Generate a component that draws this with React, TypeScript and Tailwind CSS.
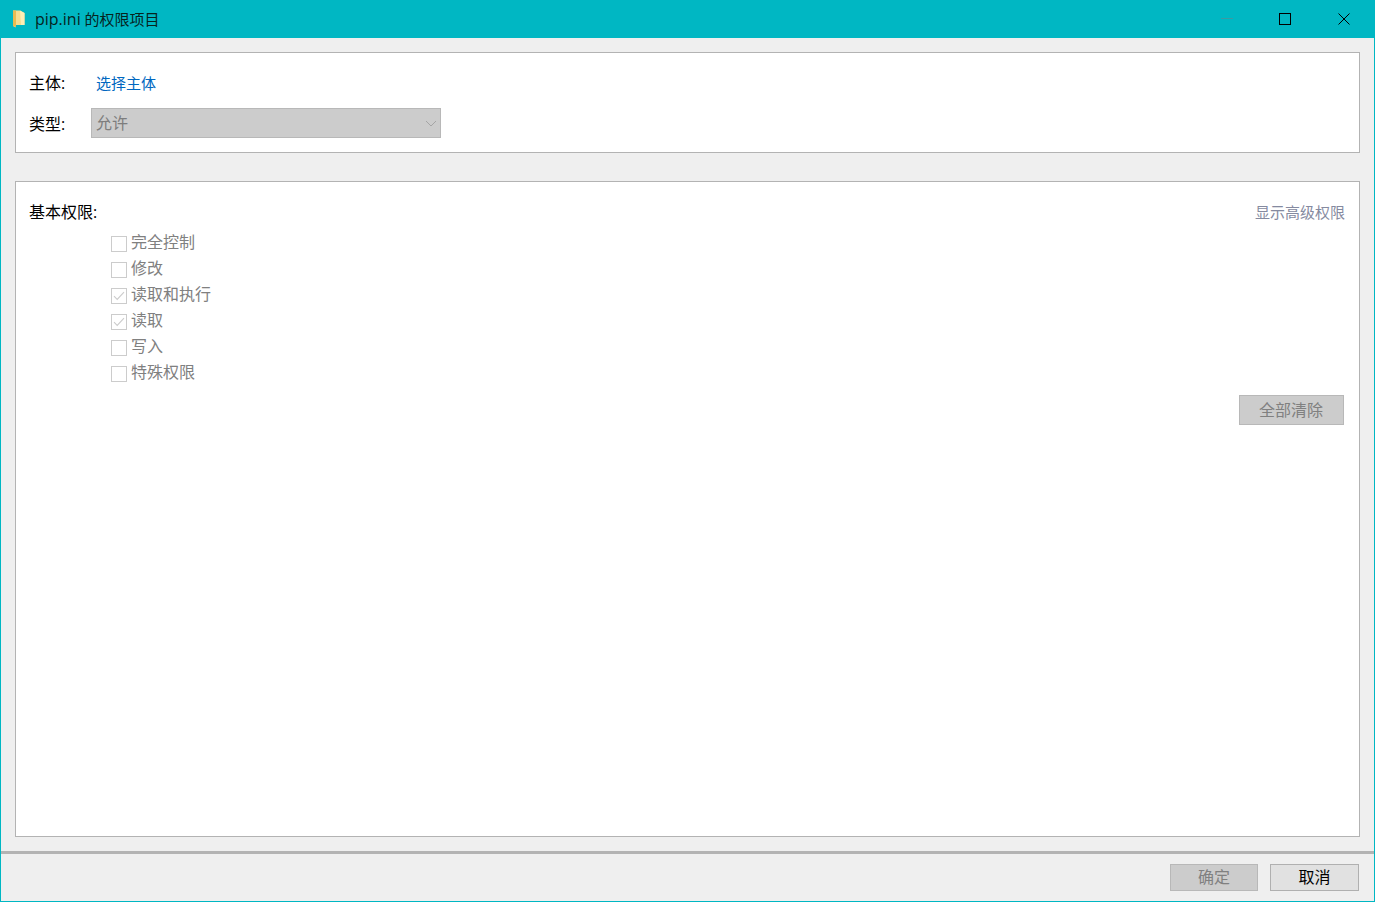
const cjk = "font-['Open_Sans','Noto_Sans_CJK_SC',sans-serif]";

function Perm({ label, checked }: { label: string; checked?: boolean }) {
  return (
    <div className="flex h-[26px] items-start">
      <div className="mt-[4px] flex h-[16px] w-[16px] shrink-0 items-center justify-center border border-[#cccccc] bg-white">
        {checked && (
          <svg width="12" height="10" viewBox="0 0 12 10" fill="none">
            <path d="M1 5.2 L4.2 8.4 L11 1.2" stroke="#cccccc" strokeWidth="1.1" />
          </svg>
        )}
      </div>
      <span className="ml-[4px] text-[16px] leading-[20px] text-[#808080]">{label}</span>
    </div>
  );
}

export default function App() {
  const perms: { label: string; checked?: boolean }[] = [
    { label: "完全控制" },
    { label: "修改" },
    { label: "读取和执行", checked: true },
    { label: "读取", checked: true },
    { label: "写入" },
    { label: "特殊权限" },
  ];
  return (
    <div className={`flex h-[902px] w-[1375px] flex-col overflow-hidden border border-[#00b7c3] bg-[#efefef] ${cjk}`}>
      {/* title bar */}
      <div className="flex h-[37px] shrink-0 items-center bg-[#00b7c3] pl-[11px] pb-[1px]">
        <svg width="14" height="18" viewBox="0 0 14 18" className="shrink-0">
          <path d="M1 0.5 H8 L12.5 3 V15 H4 L3.5 17.5 L1 16 Z" fill="#f7dc8f" />
          <path d="M8 0.5 L12.5 3 V15 H9 Z" fill="#fdeeb5" />
          <path d="M1 0.5 H4 V17 L1 16 Z" fill="#e9bb52" />
        </svg>
        <span className="ml-[9px] text-[15px] leading-[20px] text-[#06241e]">
          <span className="text-[16px]">pip.ini</span> 的权限项目
        </span>
        <div className="ml-auto flex h-full items-center">
          <svg width="12" height="12" viewBox="0 0 12 12" className="mr-[46px]">
            <path d="M0 5.5 H12" stroke="#3c9aa2" strokeWidth="1" />
          </svg>
          <svg width="12" height="12" viewBox="0 0 12 12" className="mr-[47px]">
            <rect x="0.5" y="0.5" width="11" height="11" fill="none" stroke="#000" strokeWidth="1" />
          </svg>
          <svg width="12" height="12" viewBox="0 0 12 12" className="mr-[24px]">
            <path d="M0.5 0.5 L11.5 11.5 M11.5 0.5 L0.5 11.5" stroke="#000" strokeWidth="1" />
          </svg>
        </div>
      </div>

      {/* body */}
      <div className="flex min-h-0 flex-1 flex-col px-[14px] pt-[14px]">
        <div className="h-[101px] shrink-0 border border-[#b3b3b3] bg-white pl-[13px] pt-[20px]">
          <div className="flex h-[20px] items-center">
            <span className="w-[67px] text-[16px] leading-[20px] text-black">主体:</span>
            <span className="text-[15px] leading-[20px] text-[#0067c0]">选择主体</span>
          </div>
          <div className="mt-[15px] flex h-[30px] items-center">
            <span className="w-[62px] translate-y-px text-[16px] leading-[20px] text-black">类型:</span>
            <div className="flex h-[30px] w-[350px] items-center justify-between border border-[#b8b8b8] bg-[#cccccc] pl-[4px] pr-[3px]">
              <span className="text-[16px] leading-[20px] text-[#7d7d7d]">允许</span>
              <svg width="12" height="7" viewBox="0 0 12 7" fill="none">
                <path d="M1 1 L6 6 L11 1" stroke="#a5a5a5" strokeWidth="1" />
              </svg>
            </div>
          </div>
        </div>

        <div className="mt-[28px] flex h-[656px] shrink-0 flex-col border border-[#b3b3b3] bg-white pl-[13px] pr-[14px] pt-[20px]">
          <div className="flex h-[20px] items-center justify-between">
            <span className="text-[16px] leading-[20px] text-black">基本权限:</span>
            <span className="text-[15px] leading-[20px] text-[#858aa0]">显示高级权限</span>
          </div>
          <div className="mt-[10px] flex flex-col pl-[82px]">
            {perms.map((p) => (
              <Perm key={p.label} {...p} />
            ))}
          </div>
          <div className="mt-[7px] flex justify-end pr-[1px]">
            <div className="flex h-[30px] w-[105px] items-center justify-center border border-[#b8b8b8] bg-[#cccccc] pb-[1px] pr-[1px] text-[16px] leading-[20px] text-[#808080]">
              全部清除
            </div>
          </div>
        </div>
      </div>

      {/* footer */}
      <div className="flex h-[50px] shrink-0 justify-end gap-[12px] border-t-[3px] border-[#b3b3b3] pr-[15px] pt-[10px]">
        <div className="flex h-[27px] w-[88px] items-center justify-center border border-[#b8b8b8] bg-[#cccccc] pb-[2px] text-[16px] leading-[20px] text-[#808080]">
          确定
        </div>
        <div className="flex h-[27px] w-[89px] items-center justify-center border border-[#b0b0b0] bg-[#e1e1e1] pb-[2px] text-[16px] leading-[20px] text-black">
          取消
        </div>
      </div>
    </div>
  );
}
